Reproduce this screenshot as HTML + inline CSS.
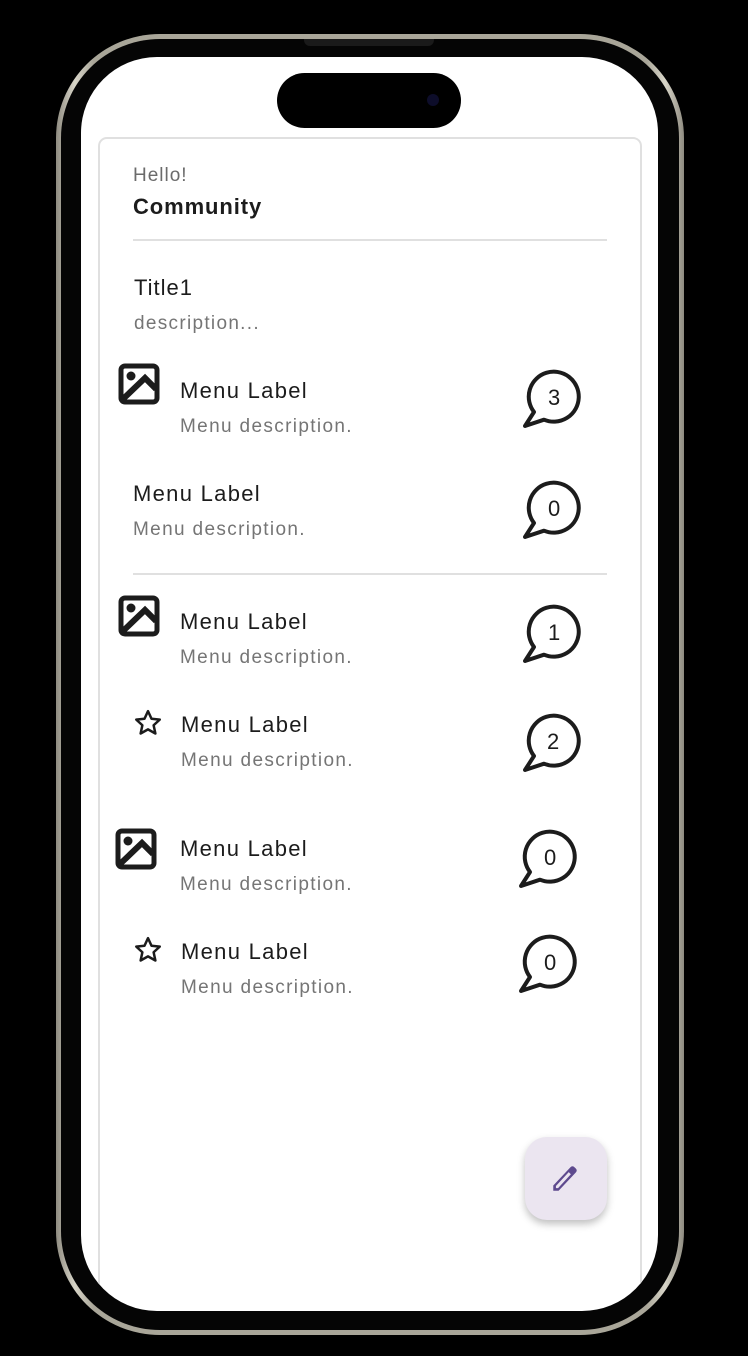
<!DOCTYPE html>
<html><head><meta charset="utf-8"><style>
*{margin:0;padding:0;box-sizing:border-box}
body{width:748px;height:1356px;background:#000;position:relative;overflow:hidden;font-family:"Liberation Sans",sans-serif}
.a{position:absolute}
.t{position:absolute;white-space:nowrap;line-height:1}
.lb{font-size:22px;color:#1c1c1c;letter-spacing:1.3px}
.ds{font-size:19px;color:#757575;letter-spacing:1.35px}
.n{position:absolute;line-height:1;font-size:22px;color:#1c1c1c}
</style></head><body>
<div class="a" style="left:56px;top:34px;width:628px;height:1301px;border-radius:104px;background:linear-gradient(90deg,#8e8b80,#d8d5c8 3%,#a9a699 6%,#a9a699 94%,#d8d5c8 97%,#8e8b80)"></div>
<div class="a" style="left:61px;top:39px;width:618px;height:1291px;border-radius:99px;background:#050505"></div>
<div class="a" style="left:81px;top:57px;width:577px;height:1254px;border-radius:76px;background:#fff;overflow:hidden">
  <div class="a" style="left:17px;top:80px;width:544px;height:1300px;border:2px solid #e0e0e0;border-radius:9px"></div>
</div>
<div class="a" style="left:304px;top:39px;width:130px;height:7px;background:#1a1a1a;border-radius:0 0 6px 6px"></div>
<div class="a" style="left:277px;top:73px;width:184px;height:55px;border-radius:28px;background:#000"></div>
<div class="a" style="left:427px;top:94px;width:12px;height:12px;border-radius:50%;background:#0d0d2a"></div>

<div class="t" style="left:133px;top:166px;font-size:19px;color:#6b6b6b;letter-spacing:1px">Hello!</div>
<div class="t" style="left:133px;top:196px;font-size:22px;font-weight:bold;color:#1c1c1c;letter-spacing:0.9px">Community</div>
<div class="a" style="left:133px;top:239px;width:474px;height:2px;background:#e0e0e0"></div>
<div class="t lb" style="left:134px;top:277px;letter-spacing:1px">Title1</div>
<div class="t ds" style="left:134px;top:314px;letter-spacing:1.3px">description...</div>

<div class="a" style="left:133px;top:573px;width:474px;height:2px;background:#e0e0e0"></div>

<svg width="0" height="0" style="position:absolute"><defs>
<symbol id="img" viewBox="0 0 42 42"><rect x="3" y="3" width="36" height="36" rx="4" fill="none" stroke="#1c1c1c" stroke-width="5"/><circle cx="13" cy="13" r="4.5" fill="#1c1c1c"/><path d="M5 36 L27 15 L38 26" fill="none" stroke="#1c1c1c" stroke-width="6"/></symbol>
<symbol id="star" viewBox="0 0 24 24"><path d="M12 2.5l2.8 6.1 6.6.7-4.9 4.5 1.4 6.6L12 17.1l-5.9 3.3 1.4-6.6-4.9-4.5 6.6-.7z" fill="none" stroke="#1c1c1c" stroke-width="2" stroke-linejoin="round"/></symbol>
<symbol id="bub" viewBox="0 0 62 62"><path d="M13 43 A25 25 0 1 1 23 50.7 L4 57 Z" fill="none" stroke="#1c1c1c" stroke-width="4" stroke-linejoin="round"/></symbol>
</defs></svg>

<!-- row1 -->
<svg class="a" style="left:118px;top:363px" width="42" height="42"><use href="#img"/></svg>
<div class="t lb" style="left:180px;top:380px">Menu Label</div>
<div class="t ds" style="left:180px;top:417px">Menu description.</div>
<svg class="a" style="left:521px;top:369px" width="62" height="62"><use href="#bub"/></svg>
<div class="n" style="left:548px;top:387px">3</div>
<!-- row2 -->
<div class="t lb" style="left:133px;top:483px">Menu Label</div>
<div class="t ds" style="left:133px;top:520px">Menu description.</div>
<svg class="a" style="left:521px;top:480px" width="62" height="62"><use href="#bub"/></svg>
<div class="n" style="left:548px;top:498px">0</div>
<!-- row3 -->
<svg class="a" style="left:118px;top:595px" width="42" height="42"><use href="#img"/></svg>
<div class="t lb" style="left:180px;top:611px">Menu Label</div>
<div class="t ds" style="left:180px;top:648px">Menu description.</div>
<svg class="a" style="left:521px;top:604px" width="62" height="62"><use href="#bub"/></svg>
<div class="n" style="left:548px;top:622px">1</div>
<!-- row4 -->
<svg class="a" style="left:133px;top:708px" width="30" height="30"><use href="#star"/></svg>
<div class="t lb" style="left:181px;top:714px">Menu Label</div>
<div class="t ds" style="left:181px;top:751px">Menu description.</div>
<svg class="a" style="left:521px;top:713px" width="62" height="62"><use href="#bub"/></svg>
<div class="n" style="left:547px;top:731px">2</div>
<!-- row5 -->
<svg class="a" style="left:115px;top:828px" width="42" height="42"><use href="#img"/></svg>
<div class="t lb" style="left:180px;top:838px">Menu Label</div>
<div class="t ds" style="left:180px;top:875px">Menu description.</div>
<svg class="a" style="left:517px;top:829px" width="62" height="62"><use href="#bub"/></svg>
<div class="n" style="left:544px;top:847px">0</div>
<!-- row6 -->
<svg class="a" style="left:133px;top:935px" width="30" height="30"><use href="#star"/></svg>
<div class="t lb" style="left:181px;top:941px">Menu Label</div>
<div class="t ds" style="left:181px;top:978px">Menu description.</div>
<svg class="a" style="left:517px;top:934px" width="62" height="62"><use href="#bub"/></svg>
<div class="n" style="left:544px;top:952px">0</div>

<div class="a" style="left:525px;top:1137px;width:82px;height:83px;border-radius:22px;background:#ebe5f0;box-shadow:0 4px 8px rgba(0,0,0,.25)"></div>
<svg class="a" style="left:549px;top:1162px" width="32" height="32" viewBox="0 0 30 30"><path d="M4 27 L4 22 L20 5 Q22 3 24 5 L25 6 Q27 8 25 10 L9 27 Z M6.5 22.5 L6.5 24.5 L8.5 24.5 L20.5 11.5 L18.5 9.5 Z" fill="#5e4a8e" fill-rule="evenodd"/></svg>
</body></html>
